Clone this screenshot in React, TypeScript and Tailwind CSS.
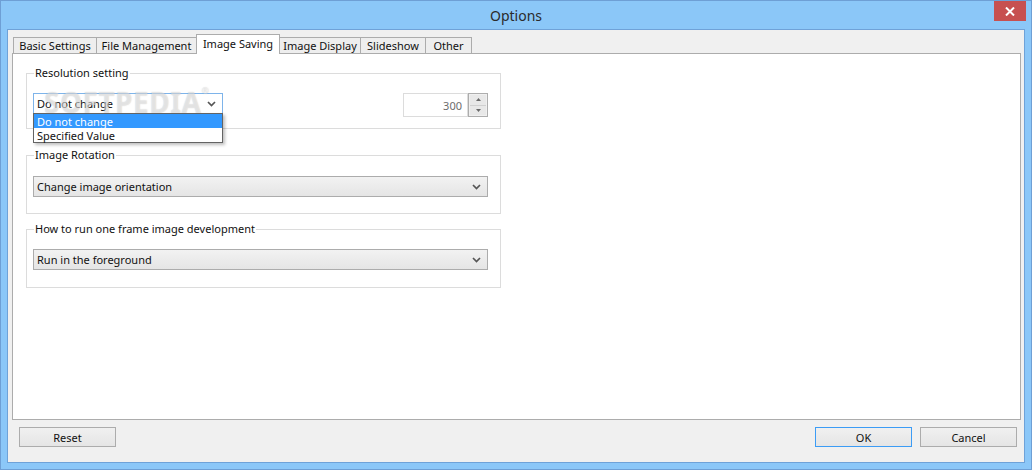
const font = { fontFamily: '"Noto Sans", "Open Sans", sans-serif' }

const tabs = [
  { label: 'Basic Settings', w: 'w-[84px]' },
  { label: 'File Management', w: 'w-[101px]' },
  { label: 'Image Saving', w: 'w-[84px]', active: true },
  { label: 'Image Display', w: 'w-[82px]' },
  { label: 'Slideshow', w: 'w-[66px]' },
  { label: 'Other', w: 'w-[47px]' },
]

function Chevron() {
  return (
    <svg width="9" height="6" viewBox="0 0 9 6" className="shrink-0">
      <path d="M1 1 L4.5 4.5 L8 1" fill="none" stroke="#555" strokeWidth="1.7" />
    </svg>
  )
}

function Combo({ value, width }: { value: string; width: string }) {
  return (
    <div
      className={`flex h-[21px] ${width} items-center justify-between border border-[#acacac] bg-[linear-gradient(180deg,#f2f2f2,#e5e5e5)] pl-[3px] pr-[6px] text-[11px] leading-none text-[#111]`}
    >
      <span>{value}</span>
      <Chevron />
    </div>
  )
}

function Group({
  title,
  className,
  children,
}: {
  title: string
  className: string
  children: React.ReactNode
}) {
  return (
    <fieldset className={`w-[475px] border border-[#dcdcdc] ${className}`}>
      <legend className="ml-[7px] px-[1px] text-[11px] leading-[16px] text-[#111]">{title}</legend>
      {children}
    </fieldset>
  )
}

function Button({ label, primary }: { label: string; primary?: boolean }) {
  return (
    <button
      type="button"
      className={`flex h-[20px] w-[97px] items-center justify-center border bg-[linear-gradient(180deg,#f0f0f0,#e5e5e5)] text-[11px] leading-none text-[#111] ${
        primary ? 'border-[#3c9cf5]' : 'border-[#acacac]'
      }`}
    >
      {label}
    </button>
  )
}

export default function App() {
  return (
    <div
      style={font}
      className="relative flex h-[470px] w-[1032px] flex-col border border-[#6e9fd5] bg-[#8bc7f8]"
    >
      <div className="flex h-[28px] items-center justify-center pt-[1px] text-[14px] text-[#2b2b2b]">
        Options
      </div>
      <button
        type="button"
        className="absolute right-[5px] top-0 flex h-[20px] w-[32px] items-center justify-center bg-[#c75050]"
      >
        <svg width="10" height="9" viewBox="0 0 10 9">
          <path d="M1 0.5 L9 8.5 M9 0.5 L1 8.5" stroke="#fff" strokeWidth="2" />
        </svg>
      </button>

      <div className="mx-[6px] mb-[6px] flex flex-1 flex-col border border-[#6fa2d8] bg-[#f0f0f0] pt-[4px]">
        <div className="ml-[5px] flex h-[19px] items-end">
          {tabs.map((t, i) =>
            t.active ? (
              <div
                key={t.label}
                className={`relative z-10 -mb-px ${i ? '-ml-px' : ''} flex h-[20px] ${t.w} items-start justify-center border-x border-t border-[#acacac] bg-white pt-[1px] text-[11px] leading-[16px] text-[#111]`}
              >
                {t.label}
              </div>
            ) : (
              <div
                key={t.label}
                className={`${i ? '-ml-px' : ''} flex h-[16px] ${t.w} items-center justify-center border-x border-t border-[#acacac] bg-[#eeeeee] text-[11px] leading-none text-[#111]`}
              >
                {t.label}
              </div>
            ),
          )}
        </div>

        <div className="ml-[4px] mr-[3px] flex h-[367px] flex-col border border-[#acacac] bg-white pl-[13px] pt-[11px]">
          <Group title="Resolution setting" className="">
            <div className="flex items-start justify-between pb-[11px] pl-[6px] pr-[12px] pt-[12px]">
              <div className="relative">
                <div className="flex h-[21px] w-[190px] items-center justify-between border border-[#7eb4ea] bg-white pl-[3px] pr-[6px] text-[11px] leading-none text-[#111]">
                  <span>Do not change</span>
                  <Chevron />
                </div>
                <div className="pointer-events-none absolute left-[11px] top-[-9px] z-10 flex select-none items-start text-[28px] font-bold leading-[36px] tracking-[0.5px] text-white/45 [text-shadow:0_0_1px_rgba(110,110,110,0.35)]">
                  SOFTPEDIA
                  <span className="mt-[2px] text-[9px] leading-[10px]">®</span>
                </div>
                <div className="absolute left-0 top-[20px] z-20 flex w-[190px] flex-col border border-[#646464] bg-white text-[11px] leading-none shadow-[2px_2px_3px_rgba(0,0,0,0.25)]">
                  <div className="flex h-[14px] items-center bg-[#3399ff] pl-[3px] text-white">Do not change</div>
                  <div className="flex h-[14px] items-center pl-[3px] text-[#111]">Specified Value</div>
                </div>
              </div>
              <div className="flex h-[24px] w-[85px]">
                <div className="flex flex-1 items-center justify-end border border-[#dcdcdc] bg-white pr-[5px] text-[11px] leading-none text-[#6d6d6d]">
                  300
                </div>
                <div className="flex w-[20px] flex-col border border-[#adadad] bg-[#f0f0f0] p-[1px]">
                  <div className="flex flex-1 items-center justify-center border-b border-[#d0d0d0] bg-[#e8e8e8]">
                    <svg width="5" height="3" viewBox="0 0 5 3">
                      <path d="M0 3 L2.5 0 L5 3 Z" fill="#6a6a6a" />
                    </svg>
                  </div>
                  <div className="flex flex-1 items-center justify-center bg-[#e8e8e8]">
                    <svg width="5" height="3" viewBox="0 0 5 3">
                      <path d="M0 0 L2.5 3 L5 0 Z" fill="#6a6a6a" />
                    </svg>
                  </div>
                </div>
              </div>
            </div>
          </Group>

          <Group title="Image Rotation" className="mt-[18px]">
            <div className="pb-[16px] pl-[6px] pr-[12px] pt-[13px]">
              <Combo value="Change image orientation" width="w-[455px]" />
            </div>
          </Group>

          <Group title="How to run one frame image development" className="mt-[7px]">
            <div className="pb-[17px] pl-[6px] pr-[12px] pt-[12px]">
              <Combo value="Run in the foreground" width="w-[455px]" />
            </div>
          </Group>
        </div>

        <div className="flex items-start pl-[11px] pr-[7px] pt-[7px]">
          <Button label="Reset" />
          <div className="flex-1" />
          <Button label="OK" primary />
          <div className="w-[8px]" />
          <Button label="Cancel" />
        </div>
      </div>
    </div>
  )
}
